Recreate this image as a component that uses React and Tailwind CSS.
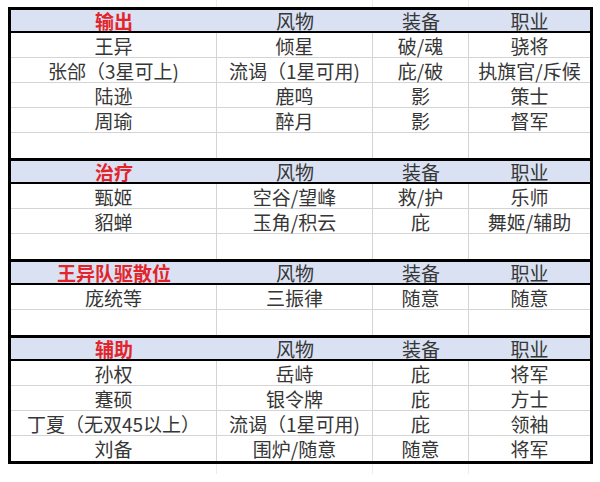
import React from "react";

const sections = [
  {
    title: "输出",
    rows: [
      ["王异", "倾星", "破/魂", "骁将"],
      ["张郃（3星可上)", "流谒（1星可用)", "庇/破", "执旗官/斥候"],
      ["陆逊", "鹿鸣", "影", "策士"],
      ["周瑜", "醉月", "影", "督军"],
      ["", "", "", ""],
    ],
  },
  {
    title: "治疗",
    rows: [
      ["甄姬", "空谷/望峰", "救/护", "乐师"],
      ["貂蝉", "玉角/积云", "庇", "舞姬/辅助"],
      ["", "", "", ""],
    ],
  },
  {
    title: "王异队驱散位",
    rows: [
      ["庞统等", "三振律", "随意", "随意"],
      ["", "", "", ""],
    ],
  },
  {
    title: "辅助",
    rows: [
      ["孙权", "岳峙", "庇", "将军"],
      ["蹇硕", "银令牌", "庇", "方士"],
      ["丁夏（无双45以上）", "流谒（1星可用)", "庇", "领袖"],
      ["刘备", "围炉/随意", "随意", "将军"],
    ],
  },
];

const widths = ["w-[206px]", "w-[156px]", "w-[96px]", "w-[121px]"];

function Section({ s, first }) {
  return (
    <div className={first ? "" : "border-t-[3px] border-black"}>
      <div className="flex h-[23px] bg-[#d9e1f2] border-b-2 border-black">
        <div className={`${widths[0]} flex items-center justify-center font-bold text-[#e3242b]`}>
          {s.title}
        </div>
        <div className={`${widths[1]} flex items-center justify-center`}>风物</div>
        <div className={`${widths[2]} flex items-center justify-center`}>装备</div>
        <div className={`${widths[3]} flex items-center justify-center`}>职业</div>
      </div>
      {s.rows.map((r, i) => (
        <div
          key={i}
          className={`flex h-[25px] ${i < s.rows.length - 1 ? "border-b border-[#d4d4d4]" : ""}`}
        >
          {r.map((c, j) => (
            <div
              key={j}
              className={`${widths[j]} flex items-center justify-center whitespace-nowrap ${j < 3 ? "border-r border-[#d4d4d4]" : ""}`}
            >
              {c}
            </div>
          ))}
        </div>
      ))}
    </div>
  );
}

export default function App() {
  return (
    <div
      className="w-[600px] h-[482px] bg-white overflow-hidden text-[19px] leading-none text-[#363636]"
      style={{ fontFamily: '"Noto Sans CJK SC", "Noto Sans", sans-serif' }}
    >
      <div className="flex h-[7px] pl-[11px]">
        <div className="w-[206px] border-r border-[#ececec]" />
        <div className="w-[156px] border-r border-[#ececec]" />
        <div className="w-[96px] border-r border-[#ececec]" />
      </div>
      <div className="ml-[8px] w-[585px] border-[3px] border-black">
        {sections.map((s, i) => (
          <Section key={i} s={s} first={i === 0} />
        ))}
      </div>
      <div className="flex h-[10px] pl-[11px]">
        <div className="w-[206px] border-r border-[#ececec]" />
        <div className="w-[156px] border-r border-[#ececec]" />
        <div className="w-[96px] border-r border-[#ececec]" />
      </div>
    </div>
  );
}
